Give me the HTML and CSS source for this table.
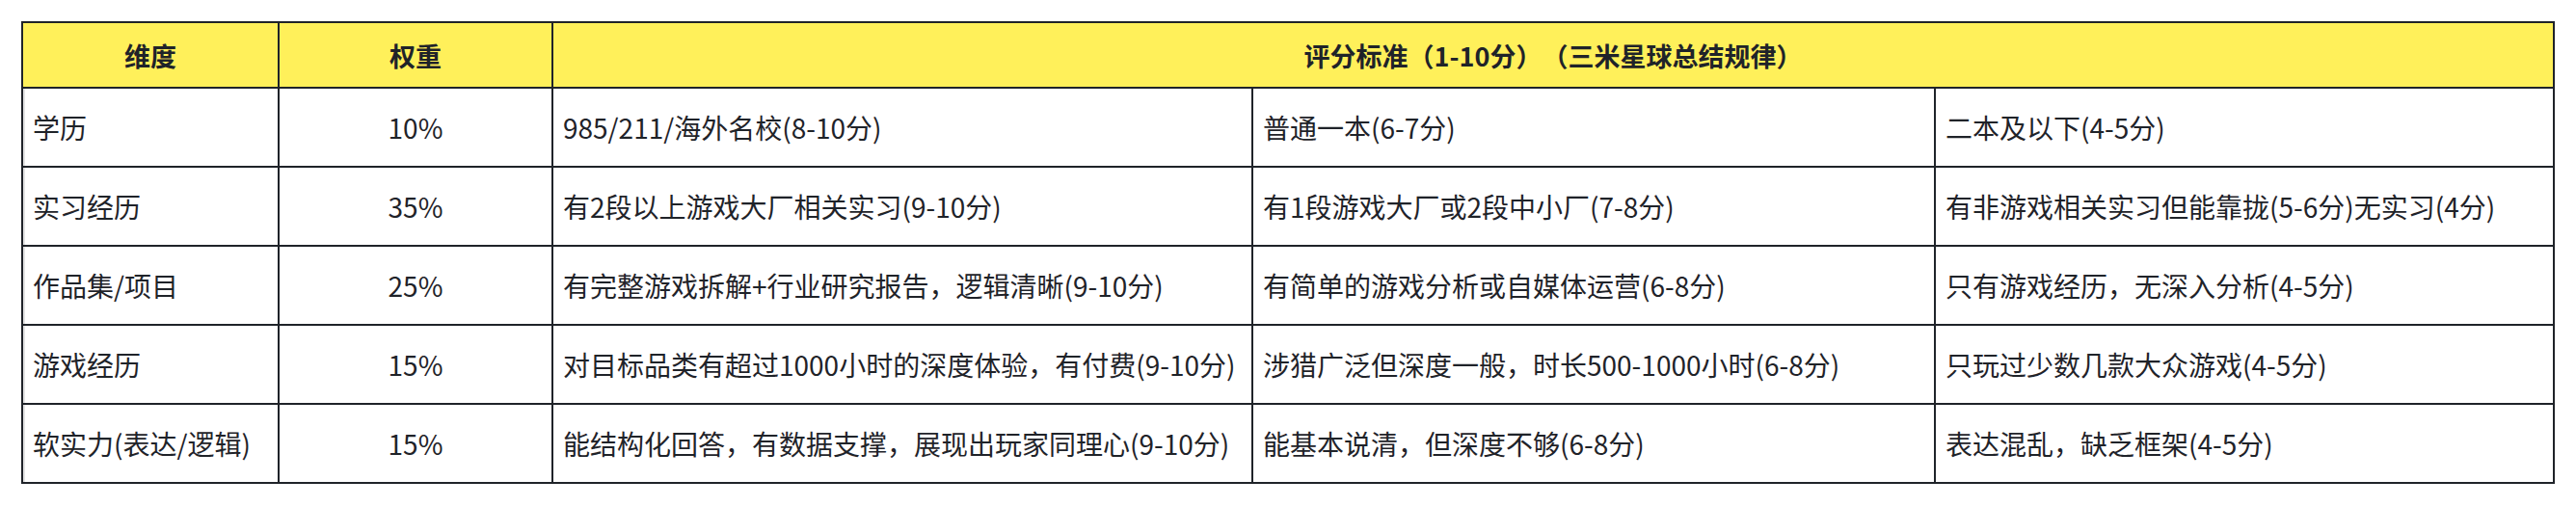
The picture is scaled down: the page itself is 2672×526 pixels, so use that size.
FILE: index.html
```html
<!DOCTYPE html>
<html lang="zh-CN">
<head>
<meta charset="utf-8">
<title>评分标准</title>
<link rel="stylesheet" href="styles.css">
</head>
<body>
<table class="score-table">
  <colgroup>
    <col class="c-dim">
    <col class="c-weight">
    <col class="c-a">
    <col class="c-b">
    <col class="c-c">
  </colgroup>
  <thead>
    <tr>
      <th>维度</th>
      <th>权重</th>
      <th colspan="3">评分标准（1-10分）（三米星球总结规律）</th>
    </tr>
  </thead>
  <tbody>
    <tr>
      <td class="dim">学历</td>
      <td class="weight">10%</td>
      <td>985/211/海外名校(8-10分)</td>
      <td>普通一本(6-7分)</td>
      <td>二本及以下(4-5分)</td>
    </tr>
    <tr>
      <td class="dim">实习经历</td>
      <td class="weight">35%</td>
      <td>有2段以上游戏大厂相关实习(9-10分)</td>
      <td>有1段游戏大厂或2段中小厂(7-8分)</td>
      <td>有非游戏相关实习但能靠拢(5-6分)无实习(4分)</td>
    </tr>
    <tr>
      <td class="dim">作品集/项目</td>
      <td class="weight">25%</td>
      <td>有完整游戏拆解+行业研究报告，逻辑清晰(9-10分)</td>
      <td>有简单的游戏分析或自媒体运营(6-8分)</td>
      <td>只有游戏经历，无深入分析(4-5分)</td>
    </tr>
    <tr>
      <td class="dim">游戏经历</td>
      <td class="weight">15%</td>
      <td>对目标品类有超过1000小时的深度体验，有付费(9-10分)</td>
      <td>涉猎广泛但深度一般，时长500-1000小时(6-8分)</td>
      <td>只玩过少数几款大众游戏(4-5分)</td>
    </tr>
    <tr>
      <td class="dim">软实力(表达/逻辑)</td>
      <td class="weight">15%</td>
      <td>能结构化回答，有数据支撑，展现出玩家同理心(9-10分)</td>
      <td>能基本说清，但深度不够(6-8分)</td>
      <td>表达混乱，缺乏框架(4-5分)</td>
    </tr>
  </tbody>
</table>
</body>
</html>
```
FILE: styles.css
```css
html, body {
  margin: 0;
  padding: 0;
  background: #ffffff;
}

body {
  padding: 22px 0 0 22px;
  font-family: "Noto Sans CJK SC", "Noto Sans", sans-serif;
  color: #1f2329;
}

.score-table {
  border-collapse: collapse;
  table-layout: fixed;
  width: 2626px;
  font-size: 28px;
  text-spacing-trim: space-all;
}

.c-dim { width: 266px; }
.c-weight { width: 284px; }
.c-a { width: 726px; }
.c-b { width: 708px; }
.c-c { width: 642px; }

.score-table th,
.score-table td {
  border: 2px solid #1f2329;
  padding: 0 10px;
  white-space: nowrap;
  vertical-align: middle;
}

.score-table th {
  height: 66px;
  background: #fff05a;
  font-size: 27px;
  font-weight: 700;
  text-align: center;
}

.score-table td {
  height: 80px;
  font-weight: 400;
  text-align: left;
}

.score-table td.dim {
  box-shadow: inset 2px 0 0 #e4e4e4;
}

.score-table td.weight {
  text-align: center;
}
```
